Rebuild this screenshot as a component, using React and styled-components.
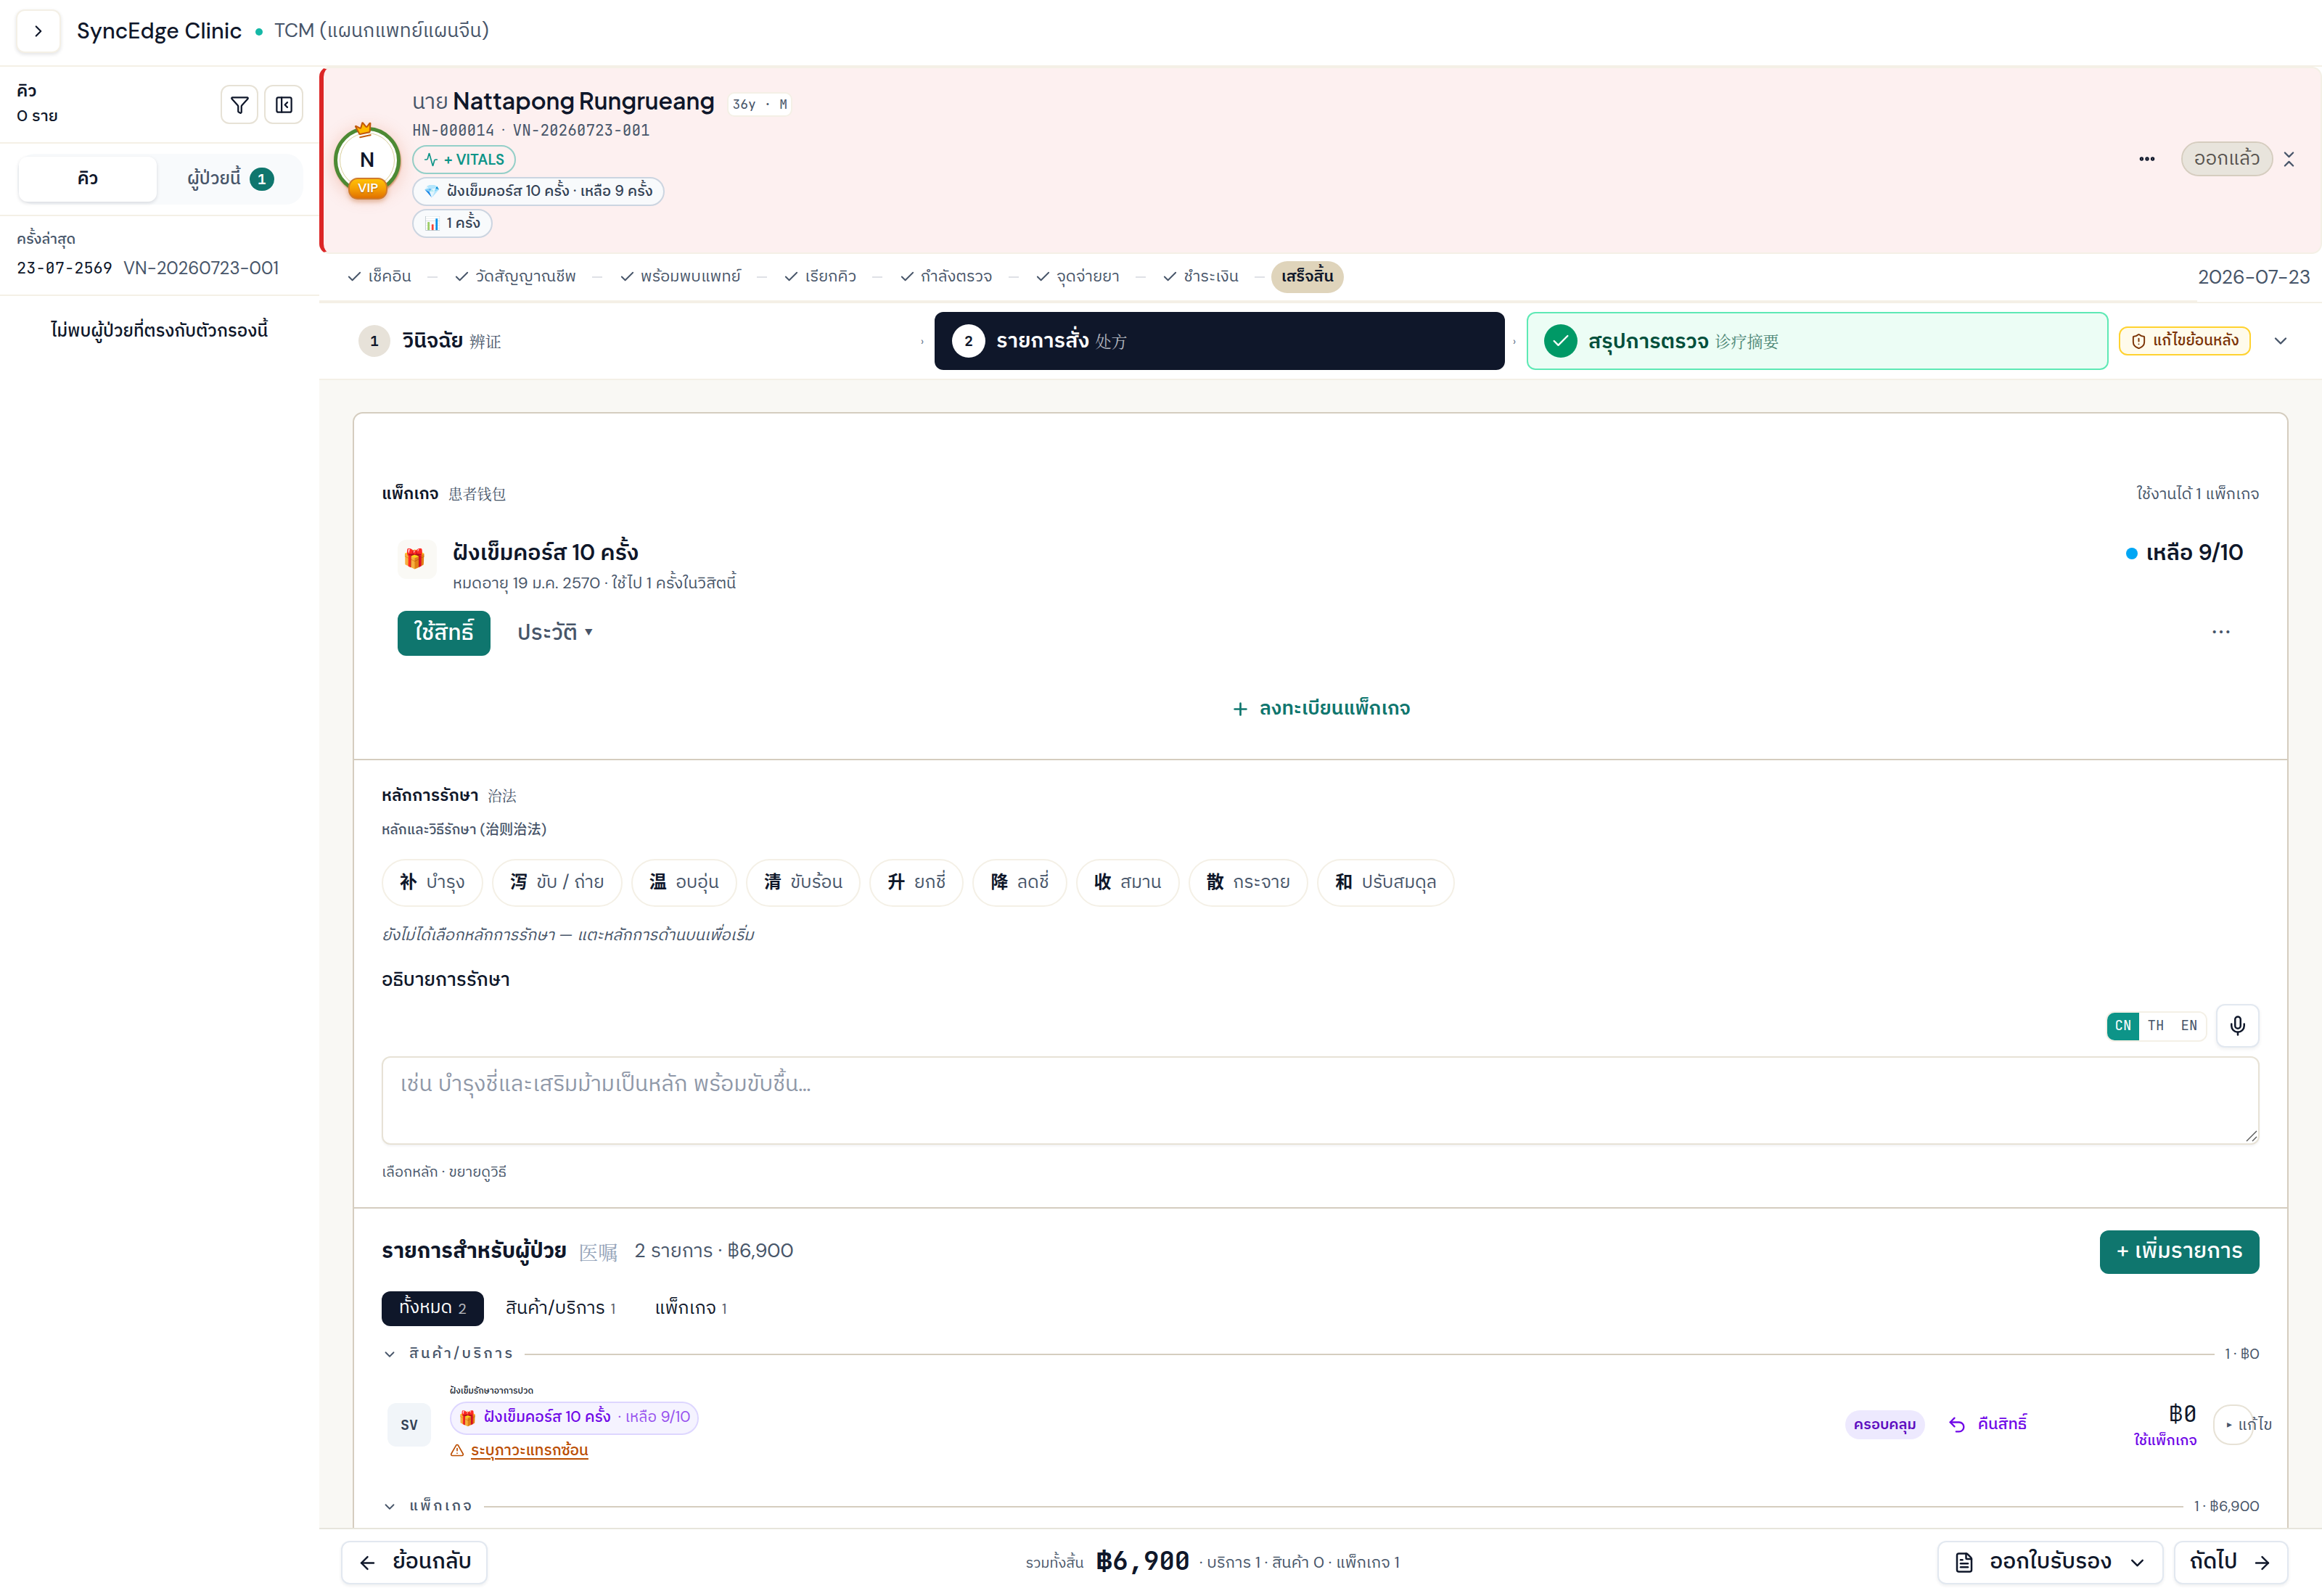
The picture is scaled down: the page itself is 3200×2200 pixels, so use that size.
import React from 'react';
import styled, { createGlobalStyle, css } from 'styled-components';
import {
  Activity, ArrowLeft, ArrowRight, Check, ChevronDown, ChevronRight, ChevronsDownUp, Crown, Ellipsis,
  FileText, Funnel, Mic, PanelLeftClose, Plus, ShieldAlert, TriangleAlert, Undo2,
} from 'lucide-react';

const ink = '#0f172a';
const slate = '#475569';
const teal = '#0f766e';
const sand = '#f4f0e6';
const sandDark = '#e7e2d6';
const stone = '#d5cdbf';
const violet = '#7008e7';
const body = `'DM Sans', 'IBM Plex Sans Thai', 'Noto Sans CJK SC', sans-serif`;
const display = `'Plus Jakarta Sans', 'IBM Plex Sans Thai', sans-serif`;
const mono = `'JetBrains Mono', 'IBM Plex Sans Thai', monospace`;
const serif = `'Noto Serif CJK SC', serif`;

const GlobalStyle = createGlobalStyle`
  *, *::before, *::after { box-sizing: border-box; }
  body { margin: 0; background: #fff; color: ${ink}; font-family: ${body}; }
  button, textarea { font-family: inherit; color: inherit; margin: 0; }
  svg { flex: none; }
`;

// base for every single-line label
const Text = styled.span`
  flex: none;
  display: block;
  white-space: nowrap;
  font-size: ${(p) => p.$s || 24}px;
  font-weight: ${(p) => p.$b || 400};
  line-height: ${(p) => p.$lh || 1.4};
  color: ${(p) => p.$c || 'inherit'};
  margin-left: ${(p) => p.$ml || 0}px;
  margin-bottom: ${(p) => p.$mb || 0}px;
`;
const Mono = styled(Text)`
  font-family: ${mono};
  font-feature-settings: 'zero';
`;
const Display = styled(Text)`font-family: ${display};`;
const Han = styled(Text)`font-family: ${serif};`;
const Emoji = styled(Text)`line-height: 1;`;
const Gap = styled.span`flex: 0 0 ${(p) => p.$w}px;`;
const Spacer = styled.span`flex: 1;`;

const Page = styled.div`
  display: flex;
  flex-direction: column;
  width: 3200px;
  height: 2200px;
  overflow: hidden;
`;

const TopBar = styled.header`
  display: flex;
  align-items: center;
  height: 92px;
  padding: 0 0 4px 22px;
  border-bottom: 2px solid ${sand};
`;
const IconButton = styled.button`
  display: flex;
  align-items: center;
  justify-content: center;
  flex: none;
  width: ${(p) => p.$w}px;
  height: ${(p) => p.$h}px;
  padding: 0;
  border: 2px solid ${(p) => p.$line || sand};
  border-radius: 12px;
  background: #fff;
  ${(p) => p.$raised && css`box-shadow: 0 2px 5px rgba(15, 23, 42, ${p.$raised});`}
`;
const BrandDot = styled.i`
  width: 10px;
  height: 10px;
  margin: 1px 16px 0 18px;
  border-radius: 50%;
  background: #14b8a6;
`;

const Columns = styled.div`
  display: flex;
  flex: 1;
  min-height: 0;
`;

const Sidebar = styled.aside`
  width: 440px;
  flex: none;
`;
const QueueHead = styled.div`
  display: flex;
  align-items: center;
  height: 106px;
  padding: 0 22px 0 23px;
  gap: 8px;
  border-bottom: 2px solid ${sand};
`;
const QueueCount = styled.div`
  flex: 1;
  margin-top: -3px;
`;
const SideTabs = styled.div`
  height: 100px;
  padding: 14px 22px 14px 24px;
  border-bottom: 2px solid ${sand};
`;
const SideTabList = styled.div`
  display: flex;
  height: 70px;
  padding: 4px 2px;
  border-radius: 24px;
  background: #f8fafc;
`;
const SideTab = styled.div`
  display: flex;
  align-items: center;
  justify-content: center;
  flex: ${(p) => (p.$active ? '0 0 190px' : 1)};
  height: 62px;
  gap: 12px;
  border-radius: 12px;
  ${(p) => p.$active && css`background: #fff; box-shadow: 0 2px 5px rgba(15, 23, 42, 0.14);`}
`;
const CountBadge = styled.span`
  width: 34px;
  height: 32px;
  border-radius: 17px;
  background: ${teal};
  color: #fff;
  font: 600 20px/32px ${mono};
  text-align: center;
`;
const LastVisit = styled.div`
  height: 110px;
  padding: 17px 0 0 23px;
  border-bottom: 2px solid ${sand};
`;
const VisitLine = styled.div`
  display: flex;
  align-items: center;
  height: 34px;
  margin-top: 10px;
  gap: 15px;
`;
const EmptyQueue = styled.p`
  display: flex;
  justify-content: center;
  margin: 31px 0 0;
`;

const Main = styled.main`
  flex: 1;
  min-width: 0;
  display: flex;
  flex-direction: column;
`;

const Banner = styled.section`
  display: flex;
  height: 258px;
  flex: none;
  padding: 24px 30px 0 14px;
  border: 2px solid ${sand};
  border-left: 6px solid #dc2626;
  border-radius: 14px;
  background: #fdf0f0;
`;
const Avatar = styled.div`
  position: relative;
  display: flex;
  align-items: center;
  justify-content: center;
  width: 92px;
  height: 92px;
  margin: 57px 16px 0 0;
  border: 5px solid #4d8a34;
  border-radius: 50%;
  background: #fff;
  box-shadow: 1px 2px 2px rgba(180, 83, 9, 0.5), 0 4px 24px rgba(220, 90, 40, 0.28);
  &::after {
    content: '';
    position: absolute;
    inset: 3px;
    border: 1px solid #d9cf9c;
    border-radius: 50%;
  }
`;
const CrownMark = styled(Crown)`
  position: absolute;
  z-index: 1;
  top: -14px;
  left: 24px;
  transform: rotate(-12deg);
  color: #c2590c;
  fill: #ffb900;
`;
const VipBadge = styled.span`
  position: absolute;
  z-index: 1;
  bottom: -13px;
  left: 15px;
  width: 54px;
  height: 30px;
  border: 2px solid #cf7a2c;
  border-radius: 13px;
  background: linear-gradient(#ffc107, #f5a004 50%, #e17100);
  box-shadow: 0 3px 6px rgba(180, 83, 9, 0.35);
  color: #fff;
  font: 600 18px/25px ${body};
  text-align: center;
  text-shadow: 0 1px 1px rgba(120, 50, 0, 0.6);
`;
const PatientInfo = styled.div`
  flex: 1;
  display: flex;
  flex-direction: column;
  align-items: flex-start;
`;
const NameRow = styled.div`
  display: flex;
  align-items: center;
  height: 40px;
`;
const AgeTag = styled.span`
  display: flex;
  align-items: center;
  justify-content: center;
  width: 90px;
  height: 34px;
  margin: 11px 0 0 17px;
  border: 2px solid ${sand};
  border-radius: 10px;
  background: #fff;
`;
const Pill = styled.span`
  display: inline-flex;
  align-items: center;
  flex: none;
  height: ${(p) => p.$h || 40}px;
  padding: 0 ${(p) => p.$px || 14}px;
  gap: ${(p) => p.$gap || 8}px;
  margin-bottom: ${(p) => p.$mb || 0}px;
  margin-left: ${(p) => p.$ml || 0}px;
  border: 2px solid ${(p) => p.$line || 'transparent'};
  border-radius: ${(p) => p.$r || 24}px;
  background: ${(p) => p.$bg || 'transparent'};
  background-clip: ${(p) => (p.$line ? 'padding-box' : 'border-box')};
  color: ${(p) => p.$c || ink};
`;
const BannerActions = styled.div`
  display: flex;
  align-items: center;
  height: 202px;
`;

const FlowRow = styled.div`
  display: flex;
  height: 66px;
  flex: none;
`;
const FlowSteps = styled.div`
  display: flex;
  align-items: center;
  width: 2588px;
  padding-left: 37px;
  border-bottom: 2px solid ${sand};
`;
const FlowStep = styled.span`
  display: flex;
  align-items: center;
  gap: 7px;
  color: ${slate};
`;
const FlowDash = styled.i`
  width: 14px;
  height: 2px;
  margin: 0 22.5px 0 22px;
  background: #dfe1e6;
`;
const FlowDate = styled.div`
  display: flex;
  align-items: center;
  flex: 1;
  padding-left: 1px;
`;

const StageBar = styled.nav`
  display: flex;
  align-items: center;
  height: 108px;
  flex: none;
  padding-left: 30px;
  border-top: 2px solid ${sand};
  border-bottom: 2px solid ${sand};
`;
const Stage = styled.div`
  display: flex;
  align-items: center;
  flex: none;
  width: ${(p) => p.$w}px;
  height: 80px;
  padding-left: 22px;
  border: 2px solid ${(p) => p.$line || 'transparent'};
  border-radius: 12px;
  background: ${(p) => p.$bg || 'transparent'};
  color: ${(p) => p.$c || ink};
`;
const StageNo = styled.span`
  display: flex;
  align-items: center;
  justify-content: center;
  width: ${(p) => p.$d || 44}px;
  height: ${(p) => p.$d || 44}px;
  margin-right: ${(p) => (p.$d ? 15 : 17)}px;
  border-radius: 50%;
  background: ${(p) => p.$bg};
  color: ${(p) => p.$c || ink};
  font: 600 20px/1 ${mono};
`;
const StageGap = styled.span`
  flex: 0 0 30px;
  padding-right: 4px;
  color: #64748b;
  font-size: 16px;
  text-align: center;
`;

const Canvas = styled.div`
  flex: 1;
  min-height: 0;
  padding: 44px 46px 0;
  background: #f9f8f4;
  overflow: hidden;
`;
const Sheet = styled.div`
  height: 1700px;
  border: 2px solid ${stone};
  border-radius: 14px;
  background: #fff;
`;
const Section = styled.section`
  height: ${(p) => p.$h}px;
  padding: ${(p) => p.$pt}px 38px 0;
  border-bottom: 2px solid ${stone};
`;
const Row = styled.div`
  display: flex;
  align-items: center;
  height: ${(p) => p.$h}px;
  margin-top: ${(p) => p.$mt || 0}px;
  gap: ${(p) => p.$gap || 0}px;
  ${(p) => p.$px && css`padding: 0 ${p.$px}px;`}
`;

const PackageRow = styled.div`
  display: flex;
  align-items: flex-start;
  margin-top: 43px;
  padding: 0 22px;
`;
const GiftTile = styled.div`
  display: flex;
  align-items: center;
  padding: 0 0 3px 7px;
  width: 54px;
  height: 54px;
  margin-right: 22px;
  border-radius: 12px;
  background: #faf9f5;
`;
const PackageInfo = styled.div`flex: 1;`;
const SolidButton = styled.button`
  display: flex;
  align-items: center;
  justify-content: center;
  width: ${(p) => p.$w}px;
  height: ${(p) => p.$h}px;
  padding: 0;
  border: 0;
  border-radius: 12px;
  background: ${teal};
  color: #fff;
`;
const RemainDot = styled.i`
  width: 16px;
  height: 16px;
  margin-right: 11px;
  border-radius: 50%;
  background: #00a6f4;
`;
const TextButton = styled.button`
  display: flex;
  align-items: center;
  justify-content: center;
  gap: 13px;
  width: 100%;
  height: 40px;
  margin-top: 53px;
  padding: 0;
  border: 0;
  background: none;
  color: ${teal};
`;

const Chip = styled.button`
  display: flex;
  align-items: center;
  flex: none;
  height: 66px;
  padding: 0 23px;
  gap: 12.4px;
  border: 2px solid ${sand};
  border-radius: 33px;
  background: #fff;
`;
const Italic = styled(Text)`font-style: italic;`;
const LangSwitch = styled.div`
  display: flex;
  height: 42px;
  margin-top: 2px;
  border: 2px solid ${sand};
  border-radius: 12px;
  overflow: hidden;
`;
const Lang = styled.span`
  width: ${(p) => p.$w || 46}px;
  background: ${(p) => (p.$on ? '#0d9488' : '#fff')};
  color: ${(p) => (p.$on ? '#fff' : slate)};
  font: 400 19px/35px ${mono};
  text-align: center;
`;
const NoteBox = styled.div`
  position: relative;
  margin-top: 12px;
`;
const Note = styled.textarea`
  display: block;
  width: 100%;
  height: 122px;
  padding: 14px 23px;
  border: 2px solid ${sandDark};
  border-radius: 12px;
  outline: 0;
  resize: none;
  background: #fff;
  box-shadow: 0 2px 3px rgba(15, 23, 42, 0.05);
  font-size: 30.3px;
  line-height: 44px;
  &::placeholder { color: #8f98a8; }
`;
const Grip = styled.svg`
  position: absolute;
  right: 3px;
  bottom: 4px;
`;

const FilterTab = styled.button`
  display: flex;
  align-items: center;
  height: 48px;
  padding: 0 24px;
  gap: 8px;
  border: 0;
  border-radius: 12px;
  background: ${(p) => (p.$on ? ink : 'none')};
  color: ${(p) => (p.$on ? '#fff' : ink)};
`;
const Faint = styled(Text)`opacity: 0.7;`;
const GroupName = styled(Text)`letter-spacing: 0.16em;`;
const Rule = styled.i`
  flex: 1;
  height: 2px;
  background: ${stone};
`;
const ItemRow = styled.div`
  display: flex;
  align-items: center;
  height: 120px;
  margin-top: 22px;
  padding-left: 8px;
`;
const CodeTile = styled.div`
  display: flex;
  align-items: center;
  justify-content: center;
  width: 60px;
  height: 60px;
  margin-right: 26px;
  border-radius: 12px;
  background: #f1f5f9;
`;
const ItemInfo = styled.div`
  display: flex;
  flex-direction: column;
  align-items: flex-start;
  flex: 1;
  height: 120px;
`;
const Warning = styled.div`
  display: flex;
  align-items: center;
  height: 30px;
  margin-top: 6px;
  gap: 9px;
  color: #bb4d00;
`;
const Underlined = styled(Text)`
  text-decoration: underline;
  text-decoration-thickness: 2px;
  text-underline-offset: 4px;
`;
const Price = styled.div`
  width: 90px;
  margin: -2px 22px 0 145px;
  text-align: right;
`;
const EditButton = styled.button`
  display: flex;
  align-items: center;
  width: 56px;
  height: 56px;
  margin-right: 8px;
  padding: 0 0 0 17px;
  gap: 8px;
  border: 2px solid ${sandDark};
  border-radius: 24px;
  background: #fff;
  color: ${slate};
`;

const Footer = styled.footer`
  display: flex;
  align-items: center;
  height: 94px;
  flex: none;
  padding: 0 46px 0 30px;
  gap: 14px;
  border-top: 2px solid #e7e5dc;
  background: #fff;
`;
const FooterButton = styled.button`
  display: flex;
  align-items: center;
  justify-content: center;
  height: 60px;
  width: ${(p) => p.$w}px;
  padding: 0;
  gap: 20px;
  border: 2px solid #e2e8f0;
  border-radius: 12px;
  background: #fff;
  box-shadow: 0 2px 4px rgba(15, 23, 42, 0.07);
`;
const Totals = styled.div`
  display: flex;
  flex: 1;
  align-items: center;
  justify-content: center;
`;

const flow = ['เช็คอิน', 'วัดสัญญาณชีพ', 'พร้อมพบแพทย์', 'เรียกคิว', 'กำลังตรวจ', 'จุดจ่ายยา', 'ชำระเงิน'];

const methods = [
  ['补', 'บำรุง'], ['泻', 'ขับ / ถ่าย'], ['温', 'อบอุ่น'], ['清', 'ขับร้อน'], ['升', 'ยกชี่'],
  ['降', 'ลดชี่'], ['收', 'สมาน'], ['散', 'กระจาย'], ['和', 'ปรับสมดุล'],
];

const GroupHead = ({ name, sum, mt }) => (
  <Row $h={30} $mt={mt}>
    <ChevronDown size={22} color={slate} />
    <GroupName $s={20.2} $b={500} $c={slate} $ml={16} $mb={4}>{name}</GroupName>
    <Gap $w={14} />
    <Rule />
    <Text $s={20} $c={slate} $ml={15} $mb={3}>{sum}</Text>
  </Row>
);

export default function App() {
  return (
    <Page>
      <GlobalStyle />
      <TopBar>
        <IconButton $w={62} $h={60} $raised={0.12}><ChevronRight size={26} /></IconButton>
        <Text $s={30.2} $b={500} $ml={22}>SyncEdge Clinic</Text>
        <BrandDot />
        <Text $s={26.6} $c={slate}>TCM (แผนกแพทย์แผนจีน)</Text>
      </TopBar>
      <Columns>
        <Sidebar>
          <QueueHead>
            <QueueCount>
              <Text $s={23} $b={600} $mb={4}>คิว</Text>
              <Text $s={22} $b={500}>0 ราย</Text>
            </QueueCount>
            <IconButton $w={52} $h={54} $line={sandDark}><Funnel size={27} /></IconButton>
            <IconButton $w={54} $h={54} $line={sandDark}><PanelLeftClose size={27} /></IconButton>
          </QueueHead>
          <SideTabs>
            <SideTabList>
              <SideTab $active><Text $s={24} $b={600} $mb={2}>คิว</Text></SideTab>
              <SideTab>
                <Text $s={24} $b={500} $c={slate} $ml={4} $mb={2}>ผู้ป่วยนี้</Text>
                <CountBadge>1</CountBadge>
              </SideTab>
            </SideTabList>
          </SideTabs>
          <LastVisit>
            <Text $s={20} $b={500} $c={slate}>ครั้งล่าสุด</Text>
            <VisitLine>
              <Mono $s={22}>23-07-2569</Mono>
              <Text $s={24} $c={slate}>VN-20260723-001</Text>
            </VisitLine>
          </LastVisit>
          <EmptyQueue><Text $s={24} $b={500}>ไม่พบผู้ป่วยที่ตรงกับตัวกรองนี้</Text></EmptyQueue>
        </Sidebar>

        <Main>
          <Banner>
            <Avatar>
              <CrownMark size={25} />
              <Text $s={28} $b={600}>N</Text>
              <VipBadge>VIP</VipBadge>
            </Avatar>
            <PatientInfo>
              <NameRow>
                <Display $s={30} $c={slate}>นาย</Display>
                <Display $s={32} $b={600} $ml={6}>Nattapong Rungrueang</Display>
                <AgeTag><Mono $s={18} $c={slate}>36y · M</Mono></AgeTag>
              </NameRow>
              <Row $h={40} $mt={2}>
                <Mono $s={21} $c={slate}>HN-000014</Mono>
                <Text $s={21} $c={slate} $ml={10}>·</Text>
                <Mono $s={21} $c={slate} $ml={11}>VN-20260723-001</Mono>
              </Row>
              <Pill $line="#94cfc8" $c="#0d9488" $mb={4}>
                <Activity size={20} /><Text $s={20.3} $b={600}>+ VITALS</Text>
              </Pill>
              <Pill $line="#cbd5e1" $bg="#f8fafc" $c="#334155" $mb={4}>
                <Emoji $s={18}>💎</Emoji><Text $s={20.1} $b={500} $ml={2} $mb={2}>ฝังเข็มคอร์ส 10 ครั้ง · เหลือ 9 ครั้ง</Text>
              </Pill>
              <Pill $line="#cbd5e1" $bg="#f8fafc" $c="#334155" $px={15}>
                <Emoji $s={18}>📊</Emoji><Text $s={20} $b={500} $ml={1} $mb={2}>1 ครั้ง</Text>
              </Pill>
            </PatientInfo>
            <BannerActions>
              <Ellipsis size={26} strokeWidth={3} />
              <Gap $w={34} />
              <Pill $h={48} $px={16} $line={stone} $bg="#e8e4dc" $c="#57534e"><Text $s={26} $mb={2}>ออกแล้ว</Text></Pill>
              <Gap $w={8} />
              <ChevronsDownUp size={27} color={slate} />
            </BannerActions>
          </Banner>

          <FlowRow>
            <FlowSteps>
              {flow.map((label) => (
                <React.Fragment key={label}>
                  <FlowStep><Check size={23} /><Text $s={22} $mb={2}>{label}</Text></FlowStep>
                  <FlowDash />
                </React.Fragment>
              ))}
              <Pill $h={44} $px={12} $ml={-14} $bg="#dfd4bb"><Text $s={21.8} $b={600} $mb={2}>เสร็จสิ้น</Text></Pill>
            </FlowSteps>
            <FlowDate><Text $s={26.5} $c={slate}>2026-07-23</Text></FlowDate>
          </FlowRow>

          <StageBar>
            <Stage $w={788}>
              <StageNo $bg="#e7e2d9">1</StageNo>
              <Text $s={28.6} $b={600}>วินิจฉัย</Text>
              <Han $s={22} $c={slate} $ml={8}>辨证</Han>
            </Stage>
            <StageGap>›</StageGap>
            <Stage $w={786} $bg={ink} $c="#fff">
              <StageNo $bg="#fff" $d={46}>2</StageNo>
              <Text $s={28.6} $b={600}>รายการสั่ง</Text>
              <Han $s={22} $c="#b4b8c0" $ml={8}>处方</Han>
            </Stage>
            <StageGap>›</StageGap>
            <Stage $w={802} $bg="#ecfdf5" $line="#5ee9b5" $c="#004f3b">
              <StageNo $bg="#009966" $c="#fff" $d={46}><Check size={28} /></StageNo>
              <Text $s={28.8} $b={600}>สรุปการตรวจ</Text>
              <Han $s={22} $c="#4b8674" $ml={8}>诊疗摘要</Han>
            </Stage>
            <Gap $w={14} />
            <Pill $h={40} $r={12} $line="#ffd230" $bg="#fffbeb" $c="#7b3306">
              <ShieldAlert size={23} /><Text $s={20.7} $b={500} $mb={2}>แก้ไขย้อนหลัง</Text>
            </Pill>
            <Gap $w={27} />
            <ChevronDown size={28} color={slate} />
          </StageBar>

          <Canvas>
            <Sheet>
              <Section $h={478} $pt={91}>
                <Row $h={40}>
                  <Text $s={22.6} $b={600}>แพ็กเกจ</Text>
                  <Han $s={20} $c={slate} $ml={13}>患者钱包</Han>
                  <Spacer />
                  <Text $s={22} $c={slate}>ใช้งานได้ 1 แพ็กเกจ</Text>
                </Row>
                <PackageRow>
                  <GiftTile><Emoji $s={26}>🎁</Emoji></GiftTile>
                  <PackageInfo>
                    <Row $h={38}><Text $s={30.3} $b={600} $mb={2}>ฝังเข็มคอร์ส 10 ครั้ง</Text></Row>
                    <Row $h={44}><Text $s={22} $c={slate}>หมดอายุ 19 ม.ค. 2570 · ใช้ไป 1 ครั้งในวิสิตนี้</Text></Row>
                  </PackageInfo>
                  <Row $h={38}><RemainDot /><Text $s={30.5} $b={600} $mb={2}>เหลือ 9/10</Text></Row>
                </PackageRow>
                <Row $h={62} $mt={16} $px={22}>
                  <SolidButton $w={128} $h={62}><Text $s={30.3} $b={500} $mb={2}>ใช้สิทธิ์</Text></SolidButton>
                  <Text $s={30} $b={500} $c={slate} $ml={37} $mb={2}>ประวัติ</Text>
                  <Text $s={11} $c={slate} $ml={10}>▼</Text>
                  <Spacer />
                  <Text $s={28} $b={500} $c={slate}>⋯</Text>
                  <Gap $w={17} />
                </Row>
                <TextButton><Plus size={27} strokeWidth={2.4} /><Text $s={26.6} $b={600}>ลงทะเบียนแพ็กเกจ</Text></TextButton>
              </Section>

              <Section $h={618} $pt={34}>
                <Row $h={30}>
                  <Text $s={22.8} $b={600}>หลักการรักษา</Text>
                  <Han $s={20} $c={slate} $ml={12}>治法</Han>
                </Row>
                <Row $h={30} $mt={17}><Text $s={19.2} $b={500} $c={slate}>หลักและวิธีรักษา (治则治法)</Text></Row>
                <Row $h={66} $mt={25} $gap={12}>
                  {methods.map(([zh, th]) => (
                    <Chip key={zh}><Text $s={24} $b={700} $mb={2}>{zh}</Text><Text $s={24.7} $c={slate} $mb={2}>{th}</Text></Chip>
                  ))}
                </Row>
                <Row $h={30} $mt={24}><Italic $s={22} $c={slate}>ยังไม่ได้เลือกหลักการรักษา — แตะหลักการด้านบนเพื่อเริ่ม</Italic></Row>
                <Row $h={30} $mt={31}><Text $s={25.8} $b={500}>อธิบายการรักษา</Text></Row>
                <Row $h={60} $mt={19} $gap={12}>
                  <Spacer />
                  <LangSwitch><Lang $on $w={44}>CN</Lang><Lang>TH</Lang><Lang>EN</Lang></LangSwitch>
                  <IconButton $w={60} $h={60} $line="#e2e8f0" $raised={0.07}><Mic size={30} /></IconButton>
                </Row>
                <NoteBox>
                  <Note placeholder="เช่น บำรุงชี่และเสริมม้ามเป็นหลัก พร้อมขับชื้น…" />
                  <Grip width="16" height="16" viewBox="0 0 16 16" stroke="#555" strokeWidth="1.4">
                    <path d="M1 15 15 1M9 15l6-6" />
                  </Grip>
                </NoteBox>
                <Row $h={30} $mt={22}><Text $s={20} $c={slate}>เลือกหลัก · ขยายดูวิธี</Text></Row>
              </Section>

              <Section $h={700} $pt={30}>
                <Row $h={60}>
                  <Text $s={29.1} $b={700} $mb={3}>รายการสำหรับผู้ป่วย</Text>
                  <Han $s={27} $c="#94a3b8" $ml={16}>医嘱</Han>
                  <Text $s={26.6} $c={slate} $ml={23} $mb={3}>2 รายการ · ฿6,900</Text>
                  <Spacer />
                  <SolidButton $w={220} $h={60}><Text $s={30.2} $b={500} $mb={4}>+ เพิ่มรายการ</Text></SolidButton>
                </Row>
                <Row $h={48} $mt={24} $gap={6}>
                  <FilterTab $on><Text $s={24.7} $mb={4}>ทั้งหมด</Text><Faint $s={20}>2</Faint></FilterTab>
                  <FilterTab><Text $s={25} $mb={4}>สินค้า/บริการ</Text><Faint $s={20}>1</Faint></FilterTab>
                  <FilterTab><Text $s={25} $mb={4}>แพ็กเกจ</Text><Faint $s={20}>1</Faint></FilterTab>
                </Row>
                <GroupHead name="สินค้า/บริการ" sum="1 · ฿0" mt={24} />
                <ItemRow>
                  <CodeTile><Mono $s={20} $b={600} $c="#334155">SV</Mono></CodeTile>
                  <ItemInfo>
                    <Text $s={12} $b={500} $lh={2.33}>ฝังเข็มรักษาอาการปวด</Text>
                    <Pill $h={46} $px={10} $gap={10} $line="#ddd6ff" $bg="#f5f3ff" $c={violet}>
                      <Emoji $s={20}>🎁</Emoji><Text $s={20.8} $b={500} $mb={4}>ฝังเข็มคอร์ส 10 ครั้ง</Text>
                      <Faint $s={20.8} $mb={4}>· เหลือ 9/10</Faint>
                    </Pill>
                    <Warning><TriangleAlert size={20} /><Underlined $s={20.8} $b={500}>ระบุภาวะแทรกซ้อน</Underlined></Warning>
                  </ItemInfo>
                  <Pill $h={40} $px={10} $bg="#ede9fe" $c="#5d0ec0"><Text $s={20} $b={600} $mb={2}>ครอบคลุม</Text></Pill>
                  <Gap $w={30} />
                  <Undo2 size={28} color={violet} />
                  <Text $s={22} $b={500} $c={violet} $ml={15} $mb={2}>คืนสิทธิ์</Text>
                  <Price><Mono $s={32}>฿0</Mono><Text $s={20} $b={500} $c={violet}>ใช้แพ็กเกจ</Text></Price>
                  <EditButton><Text $s={14}>▸</Text><Text $s={22}>แก้ไข</Text></EditButton>
                </ItemRow>
                <GroupHead name="แพ็กเกจ" sum="1 · ฿6,900" mt={38} />
              </Section>
            </Sheet>
          </Canvas>

          <Footer>
            <FooterButton $w={202}><ArrowLeft size={29} /><Text $s={30} $b={500} $mb={4}>ย้อนกลับ</Text></FooterButton>
            <Totals>
              <Text $s={20} $c={slate}>รวมทั้งสิ้น</Text>
              <Mono $s={35.6} $b={700} $ml={16} $mb={4}>฿6,900</Mono>
              <Text $s={22} $c={slate} $ml={13}>· บริการ 1 · สินค้า 0 · แพ็กเกจ 1</Text>
            </Totals>
            <FooterButton $w={312}><FileText size={30} /><Text $s={30} $b={500} $mb={4}>ออกใบรับรอง</Text><ChevronDown size={29} /></FooterButton>
            <FooterButton $w={158}><Text $s={30} $b={500} $mb={4}>ถัดไป</Text><ArrowRight size={29} /></FooterButton>
          </Footer>
        </Main>
      </Columns>
    </Page>
  );
}
